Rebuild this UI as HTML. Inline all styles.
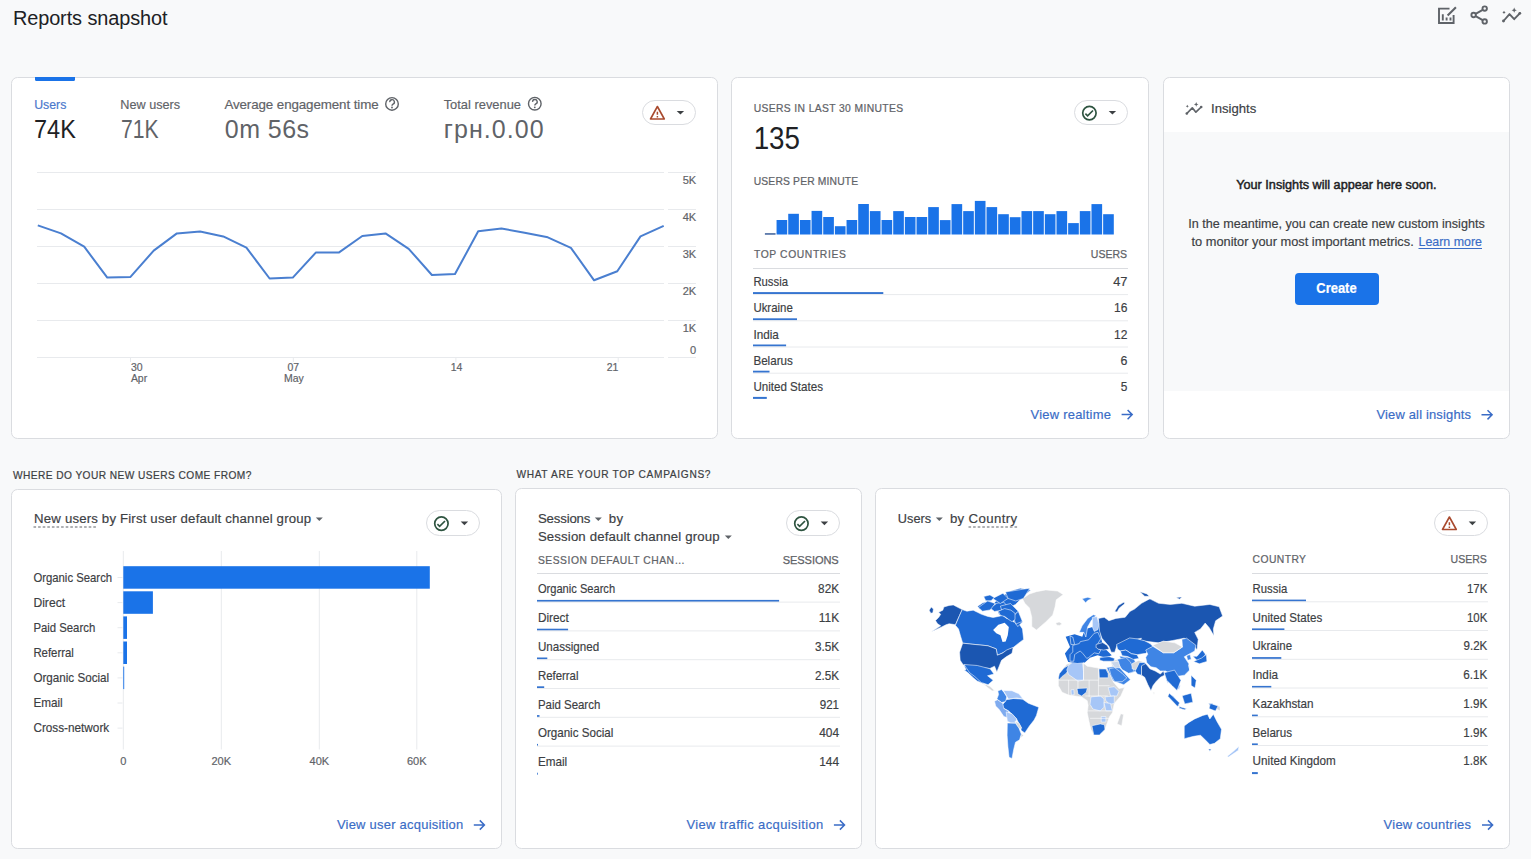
<!DOCTYPE html><html><head><meta charset="utf-8"><title>Reports snapshot</title><style>html,body{margin:0;padding:0;background:#f8f9fa;overflow:hidden}svg{display:block;font-family:"Liberation Sans",sans-serif}</style></head><body><svg width="1531" height="859" viewBox="0 0 1531 859"><rect x="0" y="0" width="1531" height="859" fill="#f8f9fa" /><text x="12.9" y="24.9" font-size="19.91" fill="#202124" textLength="154.6" lengthAdjust="spacing" >Reports snapshot</text><g fill="none" stroke="#5f6368" stroke-width="1.9"><path d="M1449.5 8.6H1439V23H1453.6V15"/><path d="M1442.8 14.2V20.4M1446.6 17.4V20.4M1450.5 17.4V20.4"/><circle cx="1484.7" cy="8.6" r="2.2"/><circle cx="1473.6" cy="15" r="2.2"/><circle cx="1484.7" cy="21.4" r="2.2"/><path d="M1475.6 13.8L1482.7 9.8M1475.6 16.2L1482.7 20.2"/></g><path d="M1447.6 15.6L1454.2 9L1455.9 7.3" stroke="#5f6368" stroke-width="2.1" fill="none"/><g fill="none" stroke="#5f6368" stroke-width="1.9" stroke-linecap="round" stroke-linejoin="round"><path d="M1503.5 21L1509.5 14.1L1514.2 19.2L1519.8 13.3"/></g><circle cx="1503.5" cy="21" r="1.4" fill="#5f6368"/><circle cx="1519.8" cy="13.3" r="1.4" fill="#5f6368"/><path d="M1504 10.8l0.6 1 1 0.6-1 0.6-0.6 1-0.6-1-1-0.6 1-0.6z M1514.2 7.6l0.8 1.8 1.8 0.8-1.8 0.8-0.8 1.8-0.8-1.8-1.8-0.8 1.8-0.8z" fill="#5f6368"/><rect x="11.5" y="77.5" width="706" height="361" fill="#fff" rx="6" stroke="#dadce0" stroke-width="1" /><path d="M35 77H75V79.5Q75 81 73.5 81H36.5Q35 81 35 79.5Z" fill="#1a73e8"/><text x="34.2" y="108.9" font-size="13.08" fill="#4a78cc" textLength="32.2" lengthAdjust="spacingAndGlyphs" stroke="#4a78cc" stroke-width="0.18">Users</text><text x="120.3" y="109.2" font-size="13.37" fill="#5f6368" textLength="59.8" lengthAdjust="spacingAndGlyphs" stroke="#5f6368" stroke-width="0.18">New users</text><text x="224.4" y="109.2" font-size="13.37" fill="#5f6368" textLength="154.2" lengthAdjust="spacing" stroke="#5f6368" stroke-width="0.18">Average engagement time</text><circle cx="392" cy="103.89999999999999" r="6.3" fill="none" stroke="#5f6368" stroke-width="1.4"/><path d="M389.8 102.1A2.3 2.3 0 1 1 393.0 104.1Q392.0 104.7 392.0 105.7" fill="none" stroke="#5f6368" stroke-width="1.4"/><circle cx="392" cy="107.5" r="0.9" fill="#5f6368"/><text x="443.7" y="108.9" font-size="13.37" fill="#5f6368" textLength="77.3" lengthAdjust="spacingAndGlyphs" stroke="#5f6368" stroke-width="0.18">Total revenue</text><circle cx="534.8" cy="103.7" r="6.3" fill="none" stroke="#5f6368" stroke-width="1.4"/><path d="M532.6 101.9A2.3 2.3 0 1 1 535.8 103.9Q534.8 104.5 534.8 105.5" fill="none" stroke="#5f6368" stroke-width="1.4"/><circle cx="534.8" cy="107.3" r="0.9" fill="#5f6368"/><text x="34.0" y="137.7" font-size="25.00" fill="#202124" textLength="41.8" lengthAdjust="spacingAndGlyphs" >74K</text><text x="120.9" y="137.7" font-size="25.00" fill="#5f6368" textLength="37.6" lengthAdjust="spacingAndGlyphs" >71K</text><text x="224.8" y="137.7" font-size="25.00" fill="#5f6368" textLength="84.2" lengthAdjust="spacing" >0m 56s</text><text x="443.7" y="137.7" font-size="25.00" fill="#5f6368" textLength="100.0" lengthAdjust="spacing" >грн.0.00</text><rect x="642.5" y="100.5" width="53" height="24" fill="#fff" rx="12.5" stroke="#dadce0" stroke-width="1" /><path d="M657.4 106.5L664.3 119.0L650.5 119.0Z" fill="none" stroke="#a94a2e" stroke-width="1.6" stroke-linejoin="round"/><path d="M657.4 111.7V114.7M657.4 115.9V117.4" stroke="#a94a2e" stroke-width="1.5"/><path d="M676.7 111.0L684.1 111.0L680.4 114.6Z" fill="#3c4043"/><line x1="37" y1="172.5" x2="664" y2="172.5" stroke="#e8eaed" stroke-width="1" /><line x1="668" y1="172.5" x2="696" y2="172.5" stroke="#e8eaed" stroke-width="1" /><line x1="37" y1="209.5" x2="664" y2="209.5" stroke="#e8eaed" stroke-width="1" /><line x1="668" y1="209.5" x2="696" y2="209.5" stroke="#e8eaed" stroke-width="1" /><line x1="37" y1="246.5" x2="664" y2="246.5" stroke="#e8eaed" stroke-width="1" /><line x1="668" y1="246.5" x2="696" y2="246.5" stroke="#e8eaed" stroke-width="1" /><line x1="37" y1="283.5" x2="664" y2="283.5" stroke="#e8eaed" stroke-width="1" /><line x1="668" y1="283.5" x2="696" y2="283.5" stroke="#e8eaed" stroke-width="1" /><line x1="37" y1="320.5" x2="664" y2="320.5" stroke="#e8eaed" stroke-width="1" /><line x1="668" y1="320.5" x2="696" y2="320.5" stroke="#e8eaed" stroke-width="1" /><line x1="37" y1="357.5" x2="664" y2="357.5" stroke="#e8eaed" stroke-width="1" /><line x1="668" y1="357.5" x2="696" y2="357.5" stroke="#e8eaed" stroke-width="1" /><text x="696.2" y="184.4" font-size="11.05" fill="#5f6368" text-anchor="end" stroke="#5f6368" stroke-width="0.18">5K</text><text x="696.2" y="221.2" font-size="11.05" fill="#5f6368" text-anchor="end" stroke="#5f6368" stroke-width="0.18">4K</text><text x="696.2" y="258.0" font-size="11.05" fill="#5f6368" text-anchor="end" stroke="#5f6368" stroke-width="0.18">3K</text><text x="696.2" y="294.8" font-size="11.05" fill="#5f6368" text-anchor="end" stroke="#5f6368" stroke-width="0.18">2K</text><text x="696.2" y="331.6" font-size="11.05" fill="#5f6368" text-anchor="end" stroke="#5f6368" stroke-width="0.18">1K</text><text x="696.2" y="353.8" font-size="11.05" fill="#5f6368" text-anchor="end" stroke="#5f6368" stroke-width="0.18">0</text><line x1="130.5" y1="357" x2="130.5" y2="362" stroke="#e8eaed" stroke-width="1" /><line x1="293.3" y1="357" x2="293.3" y2="362" stroke="#e8eaed" stroke-width="1" /><line x1="455.9" y1="357" x2="455.9" y2="362" stroke="#e8eaed" stroke-width="1" /><line x1="618.2" y1="357" x2="618.2" y2="362" stroke="#e8eaed" stroke-width="1" /><text x="130.9" y="370.9" font-size="10.47" fill="#5f6368" stroke="#5f6368" stroke-width="0.18">30</text><text x="130.9" y="381.7" font-size="10.47" fill="#5f6368" stroke="#5f6368" stroke-width="0.18">Apr</text><text x="287.5" y="370.9" font-size="10.47" fill="#5f6368" stroke="#5f6368" stroke-width="0.18">07</text><text x="284.0" y="381.7" font-size="10.47" fill="#5f6368" stroke="#5f6368" stroke-width="0.18">May</text><text x="450.8" y="370.9" font-size="10.47" fill="#5f6368" stroke="#5f6368" stroke-width="0.18">14</text><text x="606.7" y="370.9" font-size="10.47" fill="#5f6368" stroke="#5f6368" stroke-width="0.18">21</text><polyline points="37.8,225.4 61.0,233.4 84.2,246.7 107.3,277.6 130.5,276.9 153.7,250.6 176.9,233.4 200.1,231.6 223.2,236.4 246.4,247.6 269.6,278.5 292.8,277.6 316.0,252.4 339.1,252.4 362.3,236.0 385.5,233.4 408.7,248.8 431.9,275.0 455.0,274.1 478.2,231.2 501.4,228.4 524.6,232.8 547.8,237.3 570.9,247.8 594.1,280.3 617.3,271.2 640.5,236.4 663.7,225.9" fill="none" stroke="#4a7fd0" stroke-width="2" stroke-linejoin="round"/><rect x="731.5" y="77.5" width="417" height="361" fill="#fff" rx="6" stroke="#dadce0" stroke-width="1" /><text x="753.7" y="112.1" font-size="10.32" fill="#5f6368" textLength="149.4" lengthAdjust="spacing" stroke="#5f6368" stroke-width="0.22">USERS IN LAST 30 MINUTES</text><text x="753.7" y="149.2" font-size="31.40" fill="#202124" textLength="46.3" lengthAdjust="spacingAndGlyphs" >135</text><rect x="1074.5" y="100.5" width="53" height="24" fill="#fff" rx="12.5" stroke="#dadce0" stroke-width="1" /><circle cx="1089.4" cy="113.1" r="6.7" fill="none" stroke="#2e5440" stroke-width="1.7"/><path d="M1085.4 113.7L1087.6 115.8L1093.0 110.5" fill="none" stroke="#2e5440" stroke-width="1.7"/><path d="M1108.7 111.0L1116.1 111.0L1112.4 114.6Z" fill="#3c4043"/><text x="753.7" y="185.2" font-size="10.32" fill="#5f6368" textLength="104.5" lengthAdjust="spacing" stroke="#5f6368" stroke-width="0.22">USERS PER MINUTE</text><rect x="764.90" y="233.2" width="10.66" height="1.5" fill="#3b5f9a" /><rect x="776.56" y="220.0" width="10.66" height="14.50" fill="#1a73e8" /><rect x="788.23" y="213.8" width="10.66" height="20.70" fill="#1a73e8" /><rect x="799.89" y="220" width="10.66" height="14.50" fill="#1a73e8" /><rect x="811.55" y="210.9" width="10.66" height="23.60" fill="#1a73e8" /><rect x="823.22" y="217" width="10.66" height="17.50" fill="#1a73e8" /><rect x="834.88" y="226.2" width="10.66" height="8.30" fill="#1a73e8" /><rect x="846.54" y="220" width="10.66" height="14.50" fill="#1a73e8" /><rect x="858.21" y="204" width="10.66" height="30.50" fill="#1a73e8" /><rect x="869.87" y="211.1" width="10.66" height="23.40" fill="#1a73e8" /><rect x="881.53" y="220" width="10.66" height="14.50" fill="#1a73e8" /><rect x="893.20" y="211.1" width="10.66" height="23.40" fill="#1a73e8" /><rect x="904.86" y="217" width="10.66" height="17.50" fill="#1a73e8" /><rect x="916.52" y="217" width="10.66" height="17.50" fill="#1a73e8" /><rect x="928.19" y="207.1" width="10.66" height="27.40" fill="#1a73e8" /><rect x="939.85" y="220.1" width="10.66" height="14.40" fill="#1a73e8" /><rect x="951.51" y="204.1" width="10.66" height="30.40" fill="#1a73e8" /><rect x="963.18" y="211.1" width="10.66" height="23.40" fill="#1a73e8" /><rect x="974.84" y="200.9" width="10.66" height="33.60" fill="#1a73e8" /><rect x="986.50" y="207.1" width="10.66" height="27.40" fill="#1a73e8" /><rect x="998.17" y="214.2" width="10.66" height="20.30" fill="#1a73e8" /><rect x="1009.83" y="217.2" width="10.66" height="17.30" fill="#1a73e8" /><rect x="1021.49" y="211.1" width="10.66" height="23.40" fill="#1a73e8" /><rect x="1033.16" y="211.1" width="10.66" height="23.40" fill="#1a73e8" /><rect x="1044.82" y="214.2" width="10.66" height="20.30" fill="#1a73e8" /><rect x="1056.48" y="211.1" width="10.66" height="23.40" fill="#1a73e8" /><rect x="1068.15" y="223.1" width="10.66" height="11.40" fill="#1a73e8" /><rect x="1079.81" y="211.1" width="10.66" height="23.40" fill="#1a73e8" /><rect x="1091.47" y="204.1" width="10.66" height="30.40" fill="#1a73e8" /><rect x="1103.14" y="214.2" width="10.66" height="20.30" fill="#1a73e8" /><text x="753.9" y="257.9" font-size="10.32" fill="#5f6368" textLength="91.9" lengthAdjust="spacing" stroke="#5f6368" stroke-width="0.22">TOP COUNTRIES</text><text x="1127.0" y="257.9" font-size="11.05" fill="#5f6368" text-anchor="end" textLength="36.2" lengthAdjust="spacingAndGlyphs" stroke="#5f6368" stroke-width="0.25">USERS</text><line x1="753" y1="268.5" x2="1128" y2="268.5" stroke="#dadce0" stroke-width="1" /><text x="753.4" y="286.1" font-size="12.79" fill="#3c4043" textLength="34.6" lengthAdjust="spacingAndGlyphs" stroke="#3c4043" stroke-width="0.18">Russia</text><text x="1127.4" y="286.1" font-size="12.79" fill="#3c4043" text-anchor="end" textLength="14.2" lengthAdjust="spacing" stroke="#3c4043" stroke-width="0.18">47</text><rect x="753" y="292.1" width="130.3" height="2" fill="#3574d0" /><line x1="753" y1="294.6" x2="1128" y2="294.6" stroke="#e8eaed" stroke-width="1" /><text x="753.4" y="312.3" font-size="12.79" fill="#3c4043" textLength="39.4" lengthAdjust="spacingAndGlyphs" stroke="#3c4043" stroke-width="0.18">Ukraine</text><text x="1127.4" y="312.3" font-size="12.79" fill="#3c4043" text-anchor="end" textLength="13.4" lengthAdjust="spacingAndGlyphs" stroke="#3c4043" stroke-width="0.18">16</text><rect x="753" y="318.3" width="44.0" height="2" fill="#3574d0" /><line x1="753" y1="320.8" x2="1128" y2="320.8" stroke="#e8eaed" stroke-width="1" /><text x="753.4" y="338.5" font-size="12.79" fill="#3c4043" textLength="25.4" lengthAdjust="spacingAndGlyphs" stroke="#3c4043" stroke-width="0.18">India</text><text x="1127.4" y="338.5" font-size="12.79" fill="#3c4043" text-anchor="end" textLength="13.4" lengthAdjust="spacingAndGlyphs" stroke="#3c4043" stroke-width="0.18">12</text><rect x="753" y="344.5" width="33.1" height="2" fill="#3574d0" /><line x1="753" y1="347.0" x2="1128" y2="347.0" stroke="#e8eaed" stroke-width="1" /><text x="753.4" y="364.7" font-size="12.79" fill="#3c4043" textLength="39.4" lengthAdjust="spacingAndGlyphs" stroke="#3c4043" stroke-width="0.18">Belarus</text><text x="1127.4" y="364.7" font-size="12.79" fill="#3c4043" text-anchor="end" textLength="6.9" lengthAdjust="spacingAndGlyphs" stroke="#3c4043" stroke-width="0.18">6</text><rect x="753" y="370.70000000000005" width="16.5" height="2" fill="#3574d0" /><line x1="753" y1="373.20000000000005" x2="1128" y2="373.20000000000005" stroke="#e8eaed" stroke-width="1" /><text x="753.4" y="390.9" font-size="12.79" fill="#3c4043" textLength="69.6" lengthAdjust="spacingAndGlyphs" stroke="#3c4043" stroke-width="0.18">United States</text><text x="1127.4" y="390.9" font-size="12.79" fill="#3c4043" text-anchor="end" textLength="6.6" lengthAdjust="spacingAndGlyphs" stroke="#3c4043" stroke-width="0.18">5</text><rect x="753" y="396.90000000000003" width="13.8" height="2" fill="#3574d0" /><text x="1030.6" y="418.9" font-size="12.94" fill="#3a6cc6" textLength="80.3" lengthAdjust="spacing" stroke="#3a6cc6" stroke-width="0.18">View realtime</text><path d="M1121.6 414.6H1131.8M1127.6 410.0L1132.2 414.6L1127.6 419.2" stroke="#3a6cc6" stroke-width="1.5" fill="none"/><rect x="1163.5" y="77.5" width="346" height="361" fill="#fff" rx="6" stroke="#dadce0" stroke-width="1" /><rect x="1164" y="132" width="345" height="259" fill="#f8f9fa" /><g fill="none" stroke="#5f6368" stroke-width="1.7" stroke-linecap="round" stroke-linejoin="round"><path d="M1186.8 113.5L1192.3 107.8L1195.9 112.2L1201.2 107"/></g><circle cx="1186.8" cy="113.5" r="1.3" fill="#5f6368"/><circle cx="1201.2" cy="107" r="1.3" fill="#5f6368"/><path d="M1187.3 104.7l0.5 1 1 0.5-1 0.5-0.5 1-0.5-1-1-0.5 1-0.5z M1196.2 102.1l0.7 1.6 1.6 0.7-1.6 0.7-0.7 1.6-0.7-1.6-1.6-0.7 1.6-0.7z" fill="#5f6368"/><text x="1211.0" y="112.7" font-size="13.66" fill="#3c4043" textLength="45.3" lengthAdjust="spacingAndGlyphs" stroke="#3c4043" stroke-width="0.18">Insights</text><text x="1236.2" y="189.1" font-size="13.66" fill="#202124" textLength="200.3" lengthAdjust="spacingAndGlyphs" stroke="#202124" stroke-width="0.5">Your Insights will appear here soon.</text><text x="1188.3" y="228.0" font-size="13.37" fill="#3c4043" textLength="296.4" lengthAdjust="spacingAndGlyphs" stroke="#3c4043" stroke-width="0.18">In the meantime, you can create new custom insights</text><text x="1191.5" y="245.9" font-size="13.37" fill="#3c4043" textLength="222.2" lengthAdjust="spacingAndGlyphs" stroke="#3c4043" stroke-width="0.18">to monitor your most important metrics.</text><text x="1418.5" y="245.9" font-size="13.37" fill="#3a6cc6" textLength="63.5" lengthAdjust="spacingAndGlyphs" stroke="#3a6cc6" stroke-width="0.18">Learn more</text><line x1="1418.5" y1="248.5" x2="1482" y2="248.5" stroke="#3a6cc6" stroke-width="1" /><rect x="1295" y="273" width="84" height="32" fill="#1a73e8" rx="4" /><text x="1316.3" y="293.0" font-size="13.95" fill="#fff" font-weight="700" textLength="40.3" lengthAdjust="spacingAndGlyphs" stroke="#fff" stroke-width="0.2">Create</text><text x="1376.5" y="419.3" font-size="12.94" fill="#3a6cc6" textLength="94.5" lengthAdjust="spacing" stroke="#3a6cc6" stroke-width="0.18">View all insights</text><path d="M1481.5 414.8H1491.7M1487.5 410.2L1492.1 414.8L1487.5 419.4" stroke="#3a6cc6" stroke-width="1.5" fill="none"/><text x="12.9" y="478.9" font-size="10.17" fill="#3c4043" textLength="238.5" lengthAdjust="spacing" stroke="#3c4043" stroke-width="0.2">WHERE DO YOUR NEW USERS COME FROM?</text><text x="516.4" y="478.1" font-size="10.17" fill="#3c4043" textLength="194.1" lengthAdjust="spacing" stroke="#3c4043" stroke-width="0.2">WHAT ARE YOUR TOP CAMPAIGNS?</text><rect x="11.5" y="489.5" width="490" height="359" fill="#fff" rx="6" stroke="#dadce0" stroke-width="1" /><text x="34.1" y="523.3" font-size="13.23" fill="#3c4043" textLength="277.0" lengthAdjust="spacing" stroke="#3c4043" stroke-width="0.18">New users by First user default channel group</text><line x1="33.5" y1="527" x2="96" y2="527" stroke="#5f6368" stroke-width="1" stroke-dasharray="2.6 2"/><path d="M315.8 517.5L322.8 517.5L319.3 521.0Z" fill="#5f6368"/><rect x="426.5" y="510.5" width="53" height="25" fill="#fff" rx="13.0" stroke="#dadce0" stroke-width="1" /><circle cx="441.4" cy="523.6" r="6.7" fill="none" stroke="#2e5440" stroke-width="1.7"/><path d="M437.4 524.2L439.6 526.3L445.0 521.0" fill="none" stroke="#2e5440" stroke-width="1.7"/><path d="M460.7 521.5L468.1 521.5L464.4 525.2Z" fill="#3c4043"/><line x1="123.3" y1="551" x2="123.3" y2="749.5" stroke="#e8eaed" stroke-width="1" /><line x1="221.3" y1="551" x2="221.3" y2="749.5" stroke="#e8eaed" stroke-width="1" /><line x1="319.3" y1="551" x2="319.3" y2="749.5" stroke="#e8eaed" stroke-width="1" /><line x1="416.8" y1="551" x2="416.8" y2="749.5" stroke="#e8eaed" stroke-width="1" /><text x="33.4" y="581.7" font-size="12.94" fill="#3c4043" textLength="78.7" lengthAdjust="spacingAndGlyphs" stroke="#3c4043" stroke-width="0.18">Organic Search</text><line x1="117.5" y1="577.5" x2="122.5" y2="577.5" stroke="#e8eaed" stroke-width="1" /><rect x="123.3" y="566.2" width="306.5" height="22.5" fill="#1a73e8" /><text x="33.4" y="606.8" font-size="12.94" fill="#3c4043" textLength="31.7" lengthAdjust="spacingAndGlyphs" stroke="#3c4043" stroke-width="0.18">Direct</text><line x1="117.5" y1="602.6" x2="122.5" y2="602.6" stroke="#e8eaed" stroke-width="1" /><rect x="123.3" y="591.3" width="29.6" height="22.5" fill="#1a73e8" /><text x="33.4" y="631.9" font-size="12.94" fill="#3c4043" textLength="61.8" lengthAdjust="spacingAndGlyphs" stroke="#3c4043" stroke-width="0.18">Paid Search</text><line x1="117.5" y1="627.7" x2="122.5" y2="627.7" stroke="#e8eaed" stroke-width="1" /><rect x="123.3" y="616.4" width="3.7" height="22.5" fill="#1a73e8" /><text x="33.4" y="657.0" font-size="12.94" fill="#3c4043" textLength="40.5" lengthAdjust="spacingAndGlyphs" stroke="#3c4043" stroke-width="0.18">Referral</text><line x1="117.5" y1="652.8" x2="122.5" y2="652.8" stroke="#e8eaed" stroke-width="1" /><rect x="123.3" y="641.5" width="3.7" height="22.5" fill="#1a73e8" /><text x="33.4" y="682.1" font-size="12.94" fill="#3c4043" textLength="75.8" lengthAdjust="spacingAndGlyphs" stroke="#3c4043" stroke-width="0.18">Organic Social</text><line x1="117.5" y1="677.9" x2="122.5" y2="677.9" stroke="#e8eaed" stroke-width="1" /><rect x="123.3" y="666.6" width="0.9" height="22.5" fill="#1a73e8" /><text x="33.4" y="707.2" font-size="12.94" fill="#3c4043" textLength="29.3" lengthAdjust="spacingAndGlyphs" stroke="#3c4043" stroke-width="0.18">Email</text><line x1="117.5" y1="703.0" x2="122.5" y2="703.0" stroke="#e8eaed" stroke-width="1" /><text x="33.4" y="732.3" font-size="12.94" fill="#3c4043" textLength="75.8" lengthAdjust="spacingAndGlyphs" stroke="#3c4043" stroke-width="0.18">Cross-network</text><line x1="117.5" y1="728.1" x2="122.5" y2="728.1" stroke="#e8eaed" stroke-width="1" /><text x="123.3" y="765.2" font-size="11.05" fill="#5f6368" text-anchor="middle" stroke="#5f6368" stroke-width="0.18">0</text><text x="221.3" y="765.2" font-size="11.05" fill="#5f6368" text-anchor="middle" stroke="#5f6368" stroke-width="0.18">20K</text><text x="319.4" y="765.2" font-size="11.05" fill="#5f6368" text-anchor="middle" stroke="#5f6368" stroke-width="0.18">40K</text><text x="416.8" y="765.2" font-size="11.05" fill="#5f6368" text-anchor="middle" stroke="#5f6368" stroke-width="0.18">60K</text><text x="336.9" y="829.0" font-size="12.94" fill="#3a6cc6" textLength="126.3" lengthAdjust="spacing" stroke="#3a6cc6" stroke-width="0.18">View user acquisition</text><path d="M473.8 825.0H484.0M479.8 820.4L484.4 825.0L479.8 829.6" stroke="#3a6cc6" stroke-width="1.5" fill="none"/><rect x="515.5" y="488.5" width="346" height="360" fill="#fff" rx="6" stroke="#dadce0" stroke-width="1" /><text x="537.9" y="523.4" font-size="13.23" fill="#3c4043" textLength="52.5" lengthAdjust="spacing" stroke="#3c4043" stroke-width="0.18">Sessions</text><path d="M594.8 517.5L601.8 517.5L598.3 521.0Z" fill="#5f6368"/><text x="608.7" y="523.4" font-size="13.23" fill="#3c4043" textLength="14.3" lengthAdjust="spacing" stroke="#3c4043" stroke-width="0.18">by</text><text x="537.9" y="541.3" font-size="13.23" fill="#3c4043" textLength="181.6" lengthAdjust="spacing" stroke="#3c4043" stroke-width="0.18">Session default channel group</text><path d="M724.8 535.5L731.8 535.5L728.3 539.0Z" fill="#5f6368"/><rect x="786.5" y="510.5" width="53" height="25" fill="#fff" rx="13.0" stroke="#dadce0" stroke-width="1" /><circle cx="801.4" cy="523.6" r="6.7" fill="none" stroke="#2e5440" stroke-width="1.7"/><path d="M797.4 524.2L799.6 526.3L805.0 521.0" fill="none" stroke="#2e5440" stroke-width="1.7"/><path d="M820.7 521.5L828.1 521.5L824.4 525.2Z" fill="#3c4043"/><text x="537.9" y="563.5" font-size="10.32" fill="#5f6368" textLength="147.0" lengthAdjust="spacing" stroke="#5f6368" stroke-width="0.22">SESSION DEFAULT CHAN…</text><text x="838.7" y="563.5" font-size="11.05" fill="#5f6368" text-anchor="end" textLength="56.0" lengthAdjust="spacing" stroke="#5f6368" stroke-width="0.25">SESSIONS</text><line x1="537" y1="573.5" x2="840" y2="573.5" stroke="#dadce0" stroke-width="1" /><text x="537.9" y="593.3" font-size="12.79" fill="#3c4043" textLength="77.2" lengthAdjust="spacingAndGlyphs" stroke="#3c4043" stroke-width="0.18">Organic Search</text><text x="839.1" y="593.3" font-size="12.79" fill="#3c4043" text-anchor="end" textLength="21.0" lengthAdjust="spacingAndGlyphs" stroke="#3c4043" stroke-width="0.18">82K</text><rect x="537" y="599.9" width="242.1" height="2" fill="#3574d0" /><line x1="537" y1="602.1" x2="840" y2="602.1" stroke="#e8eaed" stroke-width="1" /><text x="537.9" y="622.1" font-size="12.79" fill="#3c4043" textLength="30.9" lengthAdjust="spacingAndGlyphs" stroke="#3c4043" stroke-width="0.18">Direct</text><text x="839.1" y="622.1" font-size="12.79" fill="#3c4043" text-anchor="end" textLength="20.3" lengthAdjust="spacingAndGlyphs" stroke="#3c4043" stroke-width="0.18">11K</text><rect x="537" y="628.7" width="31.1" height="2" fill="#3574d0" /><line x1="537" y1="630.9" x2="840" y2="630.9" stroke="#e8eaed" stroke-width="1" /><text x="537.9" y="650.9" font-size="12.79" fill="#3c4043" textLength="61.3" lengthAdjust="spacingAndGlyphs" stroke="#3c4043" stroke-width="0.18">Unassigned</text><text x="839.1" y="650.9" font-size="12.79" fill="#3c4043" text-anchor="end" textLength="24.1" lengthAdjust="spacingAndGlyphs" stroke="#3c4043" stroke-width="0.18">3.5K</text><rect x="537" y="657.5" width="10.3" height="2" fill="#3574d0" /><line x1="537" y1="659.7" x2="840" y2="659.7" stroke="#e8eaed" stroke-width="1" /><text x="537.9" y="679.7" font-size="12.79" fill="#3c4043" textLength="40.6" lengthAdjust="spacingAndGlyphs" stroke="#3c4043" stroke-width="0.18">Referral</text><text x="839.1" y="679.7" font-size="12.79" fill="#3c4043" text-anchor="end" textLength="24.1" lengthAdjust="spacingAndGlyphs" stroke="#3c4043" stroke-width="0.18">2.5K</text><rect x="537" y="686.3" width="7.2" height="2" fill="#3574d0" /><line x1="537" y1="688.5" x2="840" y2="688.5" stroke="#e8eaed" stroke-width="1" /><text x="537.9" y="708.5" font-size="12.79" fill="#3c4043" textLength="62.4" lengthAdjust="spacingAndGlyphs" stroke="#3c4043" stroke-width="0.18">Paid Search</text><text x="839.1" y="708.5" font-size="12.79" fill="#3c4043" text-anchor="end" textLength="19.4" lengthAdjust="spacingAndGlyphs" stroke="#3c4043" stroke-width="0.18">921</text><rect x="537" y="715.1" width="2.5" height="2" fill="#3574d0" /><line x1="537" y1="717.3" x2="840" y2="717.3" stroke="#e8eaed" stroke-width="1" /><text x="537.9" y="737.3" font-size="12.79" fill="#3c4043" textLength="75.4" lengthAdjust="spacingAndGlyphs" stroke="#3c4043" stroke-width="0.18">Organic Social</text><text x="839.1" y="737.3" font-size="12.79" fill="#3c4043" text-anchor="end" textLength="19.9" lengthAdjust="spacingAndGlyphs" stroke="#3c4043" stroke-width="0.18">404</text><rect x="537" y="743.9" width="1.0" height="2" fill="#3574d0" /><line x1="537" y1="746.1" x2="840" y2="746.1" stroke="#e8eaed" stroke-width="1" /><text x="537.9" y="766.1" font-size="12.79" fill="#3c4043" textLength="29.3" lengthAdjust="spacingAndGlyphs" stroke="#3c4043" stroke-width="0.18">Email</text><text x="839.1" y="766.1" font-size="12.79" fill="#3c4043" text-anchor="end" textLength="19.9" lengthAdjust="spacingAndGlyphs" stroke="#3c4043" stroke-width="0.18">144</text><rect x="537" y="772.7" width="0.8" height="2" fill="#3574d0" /><text x="686.4" y="828.7" font-size="12.94" fill="#3a6cc6" textLength="136.9" lengthAdjust="spacing" stroke="#3a6cc6" stroke-width="0.18">View traffic acquisition</text><path d="M833.9 825.0H844.1M839.9 820.4L844.5 825.0L839.9 829.6" stroke="#3a6cc6" stroke-width="1.5" fill="none"/><rect x="875.5" y="488.5" width="634" height="360" fill="#fff" rx="6" stroke="#dadce0" stroke-width="1" /><text x="897.8" y="523.4" font-size="13.23" fill="#3c4043" textLength="33.3" lengthAdjust="spacingAndGlyphs" stroke="#3c4043" stroke-width="0.18">Users</text><path d="M935.8 517.5L942.8 517.5L939.3 521.0Z" fill="#5f6368"/><text x="949.9" y="523.4" font-size="13.23" fill="#3c4043" textLength="14.3" lengthAdjust="spacing" stroke="#3c4043" stroke-width="0.18">by</text><text x="968.5" y="523.4" font-size="13.23" fill="#3c4043" textLength="48.7" lengthAdjust="spacing" stroke="#3c4043" stroke-width="0.18">Country</text><line x1="968.5" y1="527" x2="1017.2" y2="527" stroke="#5f6368" stroke-width="1" stroke-dasharray="2.6 2"/><rect x="1434.5" y="510.5" width="53" height="25" fill="#fff" rx="13.0" stroke="#dadce0" stroke-width="1" /><path d="M1449.4 517.0L1456.3 529.5L1442.5 529.5Z" fill="none" stroke="#a94a2e" stroke-width="1.6" stroke-linejoin="round"/><path d="M1449.4 522.2V525.2M1449.4 526.4V527.9" stroke="#a94a2e" stroke-width="1.5"/><path d="M1468.7 521.5L1476.1 521.5L1472.4 525.2Z" fill="#3c4043"/><text x="1252.6" y="562.9" font-size="10.32" fill="#5f6368" textLength="53.4" lengthAdjust="spacing" stroke="#5f6368" stroke-width="0.22">COUNTRY</text><text x="1486.9" y="562.9" font-size="11.05" fill="#5f6368" text-anchor="end" textLength="36.3" lengthAdjust="spacingAndGlyphs" stroke="#5f6368" stroke-width="0.25">USERS</text><line x1="1252" y1="573.5" x2="1488" y2="573.5" stroke="#dadce0" stroke-width="1" /><text x="1252.6" y="592.9" font-size="12.79" fill="#3c4043" textLength="34.6" lengthAdjust="spacingAndGlyphs" stroke="#3c4043" stroke-width="0.18">Russia</text><text x="1487.3" y="592.9" font-size="12.79" fill="#3c4043" text-anchor="end" textLength="20.3" lengthAdjust="spacingAndGlyphs" stroke="#3c4043" stroke-width="0.18">17K</text><rect x="1252" y="599.6" width="54.0" height="2" fill="#3574d0" /><line x1="1252" y1="601.8" x2="1488" y2="601.8" stroke="#e8eaed" stroke-width="1" /><text x="1252.6" y="621.6" font-size="12.79" fill="#3c4043" textLength="69.6" lengthAdjust="spacingAndGlyphs" stroke="#3c4043" stroke-width="0.18">United States</text><text x="1487.3" y="621.6" font-size="12.79" fill="#3c4043" text-anchor="end" textLength="20.3" lengthAdjust="spacingAndGlyphs" stroke="#3c4043" stroke-width="0.18">10K</text><rect x="1252" y="628.4" width="32.4" height="2" fill="#3574d0" /><line x1="1252" y1="630.5" x2="1488" y2="630.5" stroke="#e8eaed" stroke-width="1" /><text x="1252.6" y="650.4" font-size="12.79" fill="#3c4043" textLength="39.4" lengthAdjust="spacingAndGlyphs" stroke="#3c4043" stroke-width="0.18">Ukraine</text><text x="1487.3" y="650.4" font-size="12.79" fill="#3c4043" text-anchor="end" textLength="23.8" lengthAdjust="spacingAndGlyphs" stroke="#3c4043" stroke-width="0.18">9.2K</text><rect x="1252" y="657.1" width="29.3" height="2" fill="#3574d0" /><line x1="1252" y1="659.3" x2="1488" y2="659.3" stroke="#e8eaed" stroke-width="1" /><text x="1252.6" y="679.1" font-size="12.79" fill="#3c4043" textLength="25.4" lengthAdjust="spacingAndGlyphs" stroke="#3c4043" stroke-width="0.18">India</text><text x="1487.3" y="679.1" font-size="12.79" fill="#3c4043" text-anchor="end" textLength="24.0" lengthAdjust="spacingAndGlyphs" stroke="#3c4043" stroke-width="0.18">6.1K</text><rect x="1252" y="685.9" width="19.3" height="2" fill="#3574d0" /><line x1="1252" y1="688.0" x2="1488" y2="688.0" stroke="#e8eaed" stroke-width="1" /><text x="1252.6" y="707.9" font-size="12.79" fill="#3c4043" textLength="61.0" lengthAdjust="spacingAndGlyphs" stroke="#3c4043" stroke-width="0.18">Kazakhstan</text><text x="1487.3" y="707.9" font-size="12.79" fill="#3c4043" text-anchor="end" textLength="24.0" lengthAdjust="spacingAndGlyphs" stroke="#3c4043" stroke-width="0.18">1.9K</text><rect x="1252" y="714.6" width="5.8" height="2" fill="#3574d0" /><line x1="1252" y1="716.8" x2="1488" y2="716.8" stroke="#e8eaed" stroke-width="1" /><text x="1252.6" y="736.6" font-size="12.79" fill="#3c4043" textLength="39.4" lengthAdjust="spacingAndGlyphs" stroke="#3c4043" stroke-width="0.18">Belarus</text><text x="1487.3" y="736.6" font-size="12.79" fill="#3c4043" text-anchor="end" textLength="24.0" lengthAdjust="spacingAndGlyphs" stroke="#3c4043" stroke-width="0.18">1.9K</text><rect x="1252" y="743.4" width="5.8" height="2" fill="#3574d0" /><line x1="1252" y1="745.5" x2="1488" y2="745.5" stroke="#e8eaed" stroke-width="1" /><text x="1252.6" y="765.4" font-size="12.79" fill="#3c4043" textLength="83.2" lengthAdjust="spacingAndGlyphs" stroke="#3c4043" stroke-width="0.18">United Kingdom</text><text x="1487.3" y="765.4" font-size="12.79" fill="#3c4043" text-anchor="end" textLength="24.0" lengthAdjust="spacingAndGlyphs" stroke="#3c4043" stroke-width="0.18">1.8K</text><rect x="1252" y="772.1" width="5.8" height="2" fill="#3574d0" /><text x="1383.6" y="829.0" font-size="12.94" fill="#3a6cc6" textLength="87.4" lengthAdjust="spacing" stroke="#3a6cc6" stroke-width="0.18">View countries</text><path d="M1482.0 825.0H1492.2M1488.0 820.4L1492.6 825.0L1488.0 829.6" stroke="#3a6cc6" stroke-width="1.5" fill="none"/><g stroke-linejoin="round"><polygon points="1022.47,598.63 1029.46,593.97 1036.45,591.64 1045.76,589.90 1057.41,591.06 1063.23,594.56 1056.24,599.80 1055.08,606.78 1052.75,614.93 1045.76,621.92 1036.45,630.07 1031.79,626.58 1031.79,617.26 1029.46,607.95 1024.80,603.29" fill="#d6d8db" stroke="#fff" stroke-width="0.55"/><polygon points="1055.66,623.09 1059.16,621.92 1062.07,623.67 1059.74,625.41 1056.83,625.18" fill="#d6d8db" stroke="#fff" stroke-width="0.55"/><polygon points="929.19,610.15 931.29,607.00 933.38,609.10 932.86,612.77 930.76,613.29" fill="#1b56b1" stroke="#fff" stroke-width="0.55"/><polygon points="935.48,620.62 938.62,617.48 940.72,614.34 938.62,612.24 942.81,610.15 943.86,607.00 949.10,605.43 953.29,604.91 962.20,609.62 959.58,615.39 955.39,624.82 952.77,624.29 949.10,623.77 945.96,624.82 941.76,626.91 931.29,631.63 940.72,625.86 937.57,623.77" fill="#1b56b1" stroke="#fff" stroke-width="0.55"/><polygon points="962.20,609.62 966.91,611.19 973.20,610.15 977.39,612.24 981.58,614.34 987.87,616.43 993.11,617.48 998.34,616.43 1002.54,615.39 1006.73,618.53 1013.01,619.58 1013.16,621.92 1017.82,621.92 1022.47,628.91 1023.64,639.39 1018.98,642.88 1013.16,647.54 1008.50,649.87 999.18,654.53 997.30,655.20 996.25,648.91 987.87,645.77 972.15,644.20 962.72,643.15 960.62,636.34 958.53,629.01 955.39,625.34 959.58,615.39" fill="#1f6ad4" stroke="#fff" stroke-width="0.55"/><polygon points="993.11,630.05 998.34,624.82 1004.63,622.72 1008.82,626.91 1007.77,635.29 1005.68,641.58 1002.54,642.10 1000.44,635.29 996.25,633.20" fill="#ffffff"/><polygon points="977.64,606.20 982.88,602.71 988.70,600.96 992.20,602.13 989.87,607.95 985.21,610.28 979.39,609.11" fill="#1f6ad4" stroke="#fff" stroke-width="0.55"/><polygon points="985.21,597.47 989.87,596.30 992.20,599.80 987.54,600.38" fill="#1f6ad4" stroke="#fff" stroke-width="0.55"/><polygon points="994.53,602.13 1001.51,597.47 1008.50,591.64 1020.15,588.15 1030.63,589.90 1024.80,595.14 1020.15,599.80 1015.49,604.45 1010.83,606.78 1006.17,607.95 1001.51,606.78 996.86,607.95" fill="#1f6ad4" stroke="#fff" stroke-width="0.55"/><polygon points="1005.01,610.28 1011.99,609.11 1020.15,617.26 1022.47,621.92 1017.82,626.58 1011.99,618.43" fill="#1f6ad4" stroke="#fff" stroke-width="0.55"/><polygon points="996.86,609.11 1001.51,608.53 1003.84,613.77 999.18,614.93" fill="#1f6ad4" stroke="#fff" stroke-width="0.55"/><polygon points="989.87,607.95 996.86,603.29 1003.84,602.13 1008.50,607.95 1001.51,610.28 994.53,611.44" fill="#1f6ad4" stroke="#fff" stroke-width="0.55"/><polygon points="962.72,643.15 972.15,644.20 987.87,645.77 996.25,648.91 997.30,655.20 1002.54,653.11 1006.73,649.96 1011.97,647.87 1013.16,647.54 1011.99,653.36 1006.17,656.86 1001.51,660.35 999.18,666.17 996.86,671.99 994.53,666.17 989.87,668.50 985.21,667.92 980.55,669.67 975.90,668.50 971.24,666.17 963.32,665.01 960.17,660.35 959.59,652.20" fill="#1b56b1" stroke="#fff" stroke-width="0.55"/><polygon points="964.02,665.59 971.24,666.40 975.90,669.08 978.22,673.16 978.22,674.66 980.55,678.15 985.21,678.73 988.12,676.99 986.38,681.64 982.88,683.39 977.06,681.06 972.40,676.99 968.91,673.49 964.25,670.00 966.00,669.67" fill="#1f6ad4" stroke="#fff" stroke-width="0.55"/><polygon points="982.88,683.39 989.87,686.30 994.53,690.38 992.20,690.96 987.54,687.47" fill="#d6d8db" stroke="#fff" stroke-width="0.55"/><polygon points="963.99,664.48 977.31,665.51 990.12,668.83 993.96,673.96 987.55,675.75 993.19,680.36 988.07,684.71 981.15,682.41 974.75,676.52 969.63,672.68" fill="#1f6ad4" stroke="#fff" stroke-width="0.55"/><polygon points="978.59,607.38 987.55,600.97 995.24,603.53 990.12,609.94 982.43,611.22" fill="#1f6ad4" stroke="#fff" stroke-width="0.55"/><polygon points="992.68,598.41 1002.92,593.29 1008.04,598.41 1000.36,603.53" fill="#1f6ad4" stroke="#fff" stroke-width="0.55"/><polygon points="1005.48,592.01 1029.81,588.17 1023.41,598.41 1015.72,600.97 1008.04,598.41" fill="#1f6ad4" stroke="#fff" stroke-width="0.55"/><polygon points="1000.36,606.09 1010.60,603.53 1018.28,611.22 1013.16,616.34 1002.92,613.78" fill="#1f6ad4" stroke="#fff" stroke-width="0.55"/><polygon points="1018.28,611.22 1022.38,621.46 1015.72,624.02 1013.16,616.34" fill="#1f6ad4" stroke="#fff" stroke-width="0.55"/><polygon points="998.34,611.19 1004.63,608.58 1010.92,610.15 1015.00,613.29 1015.00,619.58 1011.97,621.67 1008.82,619.58 1004.63,616.43 1000.44,615.39" fill="#1f6ad4" stroke="#fff" stroke-width="0.55"/><polygon points="983.68,596.53 989.96,594.95 994.15,597.57 991.01,600.72 985.77,600.72" fill="#1f6ad4" stroke="#fff" stroke-width="0.55"/><polygon points="1006.17,699.69 1013.16,698.53 1022.47,699.11 1028.30,703.19 1038.78,707.26 1036.45,715.41 1034.12,720.07 1029.46,725.90 1024.80,732.88 1021.31,730.55 1020.15,725.90 1016.65,718.91 1011.99,714.25 1008.50,710.76 1002.68,707.85 1002.10,704.93 1004.43,702.61" fill="#1f6ad4" stroke="#fff" stroke-width="0.55"/><polygon points="997.79,690.96 1001.51,689.56 1003.84,692.13 1006.75,696.78 1005.59,701.44 1001.51,702.61 996.86,699.11 998.60,694.45" fill="#3f85e5" stroke="#fff" stroke-width="0.55"/><polygon points="1003.26,690.38 1011.99,690.73 1018.98,693.87 1023.06,699.11 1016.65,697.95 1008.50,699.11 1006.75,696.20" fill="#a6c6f7" stroke="#fff" stroke-width="0.55"/><polygon points="994.53,701.21 997.44,699.69 1002.68,703.19 1003.84,708.43 1008.50,711.34 1007.92,717.74 1003.84,716.58 999.18,709.59 995.69,706.10" fill="#7fabef" stroke="#fff" stroke-width="0.55"/><polygon points="1006.17,711.92 1011.99,713.67 1016.65,718.91 1015.49,722.98 1010.83,722.98 1007.34,721.24" fill="#a6c6f7" stroke="#fff" stroke-width="0.55"/><polygon points="1014.91,721.24 1018.98,722.98 1021.89,728.22 1018.40,728.22" fill="#d6d8db" stroke="#fff" stroke-width="0.55"/><polygon points="1020.15,732.88 1023.64,735.21 1021.31,737.54" fill="#d6d8db" stroke="#fff" stroke-width="0.55"/><polygon points="1007.34,722.98 1015.49,723.33 1018.98,728.22 1021.31,734.05 1019.56,739.87 1015.49,742.20 1013.74,749.18 1011.99,758.50 1009.08,757.34 1007.92,746.86 1007.10,735.21" fill="#3f85e5" stroke="#fff" stroke-width="0.55"/><polygon points="1058.38,678.28 1062.11,669.90 1066.76,664.31 1072.35,662.45 1082.60,662.45 1087.25,666.18 1098.43,668.04 1108.21,668.97 1113.33,682.01 1118.92,688.53 1124.51,687.60 1120.78,695.98 1114.26,703.43 1112.40,712.74 1109.60,716.47 1106.81,723.92 1104.95,729.51 1099.36,735.00 1093.77,735.00 1090.98,729.51 1089.12,722.05 1087.25,712.74 1088.18,705.29 1087.25,700.63 1081.66,696.91 1075.15,695.98 1068.63,695.05 1062.11,692.25 1058.38,685.73" fill="#d6d8db" stroke="#fff" stroke-width="0.55"/><polygon points="1058.38,678.28 1059.31,673.63 1063.97,668.04 1068.63,665.24 1071.42,666.18 1068.63,669.90 1065.83,673.63 1062.11,676.42 1059.31,679.40" fill="#1f6ad4" stroke="#fff" stroke-width="0.55"/><polygon points="1068.63,665.24 1072.35,662.45 1082.60,662.92 1083.53,671.76 1083.53,680.15 1077.94,681.08 1068.63,674.56 1066.76,669.90" fill="#a6c6f7" stroke="#fff" stroke-width="0.55"/><polygon points="1098.89,668.97 1105.88,668.97 1108.21,673.63 1108.21,677.82 1099.36,677.82" fill="#1f6ad4" stroke="#fff" stroke-width="0.55"/><polygon points="1077.01,688.53 1087.25,688.06 1086.32,692.25 1081.66,695.98 1077.94,694.12" fill="#1f6ad4" stroke="#fff" stroke-width="0.55"/><polygon points="1070.95,689.92 1073.75,689.46 1074.21,694.58 1071.42,695.05" fill="#a6c6f7" stroke="#fff" stroke-width="0.55"/><polygon points="1108.21,687.60 1114.26,686.66 1118.92,691.32 1117.05,695.98 1110.54,695.98" fill="#a6c6f7" stroke="#fff" stroke-width="0.55"/><polygon points="1090.98,696.91 1100.29,695.98 1104.02,698.77 1104.02,707.15 1100.29,710.88 1092.84,709.02 1090.05,704.36" fill="#a6c6f7" stroke="#fff" stroke-width="0.55"/><polygon points="1104.95,696.91 1114.26,695.98 1114.26,703.43 1109.60,704.36 1105.88,700.63" fill="#a6c6f7" stroke="#fff" stroke-width="0.55"/><polygon points="1104.02,702.50 1110.54,703.43 1112.40,710.88 1105.88,710.88" fill="#a6c6f7" stroke="#fff" stroke-width="0.55"/><polygon points="1101.22,716.47 1105.88,716.47 1105.88,722.05 1101.22,722.05" fill="#a6c6f7" stroke="#fff" stroke-width="0.55"/><polygon points="1091.91,725.78 1100.29,723.92 1104.48,724.85 1104.95,729.51 1099.36,735.00 1093.77,735.00" fill="#1f6ad4" stroke="#fff" stroke-width="0.55"/><polygon points="1117.05,723.92 1120.78,713.67 1123.57,714.60 1121.71,725.78" fill="#d6d8db" stroke="#fff" stroke-width="0.55"/><polygon points="1065.66,636.82 1074.62,634.26 1082.30,636.82 1084.87,629.14 1092.55,627.09 1098.95,621.46 1100.74,636.82 1103.30,647.07 1111.75,655.26 1105.35,657.82 1097.67,655.26 1089.99,657.82 1084.87,662.43 1077.18,662.94 1068.22,661.92 1064.89,653.47 1070.01,647.07" fill="#1f6ad4"/><polygon points="1110.47,660.38 1120.72,659.36 1123.79,667.55 1113.55,670.63" fill="#d6d8db" stroke="#fff" stroke-width="0.55"/><polygon points="1106.63,667.55 1118.16,666.02 1130.45,679.85 1123.79,684.71 1113.03,680.87" fill="#3f85e5" stroke="#fff" stroke-width="0.55"/><polygon points="1119.44,656.03 1133.52,658.08 1139.15,670.12 1130.45,673.19 1123.28,664.99" fill="#3f85e5" stroke="#fff" stroke-width="0.55"/><polygon points="1098.42,618.42 1104.24,617.26 1108.90,620.75 1115.89,618.42 1125.20,617.26 1129.86,611.44 1134.51,609.11 1141.50,603.29 1150.00,598.63 1149.31,598.62 1158.62,603.28 1170.26,604.44 1181.90,603.28 1194.71,606.19 1209.84,604.44 1219.15,606.77 1222.64,616.08 1215.66,620.74 1213.33,628.89 1213.91,635.87 1209.26,627.72 1205.18,623.07 1200.53,628.89 1194.71,632.38 1198.20,639.36 1197.04,649.84 1192.38,644.02 1184.23,638.20 1172.59,640.53 1158.62,642.86 1140.00,640.53 1141.50,638.21 1129.86,640.54 1122.87,642.87 1117.05,645.20 1114.72,652.19 1111.23,652.19 1108.90,646.36 1101.91,638.21 1099.59,631.23" fill="#1b56b1" stroke="#fff" stroke-width="0.55"/><polygon points="1140.00,591.64 1146.98,593.97 1149.31,596.30 1144.66,596.30" fill="#1b56b1" stroke="#fff" stroke-width="0.55"/><polygon points="1176.08,597.46 1181.90,596.88 1179.58,599.21" fill="#1b56b1" stroke="#fff" stroke-width="0.55"/><polygon points="1114.72,611.44 1118.21,605.61 1124.04,602.12 1124.62,603.87 1119.38,607.94 1117.05,612.02" fill="#1b56b1" stroke="#fff" stroke-width="0.55"/><polygon points="1082.12,598.63 1087.94,597.23 1092.02,598.63 1087.94,600.37 1085.61,602.70" fill="#3f85e5" stroke="#fff" stroke-width="0.55"/><polygon points="1080.24,641.66 1088.63,639.80 1094.21,633.28 1097.94,632.35 1100.73,638.87 1097.94,643.53 1096.08,647.25 1100.73,650.05 1098.87,653.77 1094.21,652.84 1088.63,657.50 1086.76,658.43 1083.04,653.77 1080.24,650.98 1075.59,653.77 1074.66,654.70 1073.73,661.22 1070.00,661.22 1070.00,654.70 1072.79,651.91 1072.79,645.39 1079.31,643.53" fill="#1f6ad4" stroke="#fff" stroke-width="0.55"/><polygon points="1070.00,636.08 1072.79,637.01 1074.66,644.46 1070.93,644.46" fill="#1f6ad4" stroke="#fff" stroke-width="0.55"/><polygon points="1079.31,632.35 1082.11,625.83 1087.69,618.38 1093.28,614.66 1096.08,615.59 1091.42,620.24 1087.69,626.76 1085.83,637.01 1083.97,632.35" fill="#3f85e5" stroke="#fff" stroke-width="0.55"/><polygon points="1092.35,617.45 1097.01,616.52 1098.87,623.97 1097.94,629.56 1094.21,631.42 1092.35,626.76" fill="#a6c6f7" stroke="#fff" stroke-width="0.55"/><polygon points="1096.08,644.46 1102.60,642.60 1107.25,645.39 1109.12,649.12 1103.53,650.05 1097.94,649.12 1096.08,647.25" fill="#1b56b1" stroke="#fff" stroke-width="0.55"/><polygon points="1099.80,657.50 1109.12,656.57 1114.70,658.43 1113.77,661.22 1103.53,661.22 1099.80,660.29" fill="#1f6ad4" stroke="#fff" stroke-width="0.55"/><polygon points="1116.57,644.46 1122.15,641.66 1129.60,637.94 1137.05,638.87 1144.51,640.73 1150.00,643.53 1152.80,646.35 1145.82,653.33 1142.64,653.77 1137.05,654.70 1131.47,653.77 1125.88,650.05 1120.29,650.98 1117.50,649.12" fill="#1f6ad4" stroke="#fff" stroke-width="0.55"/><polygon points="1120.29,650.98 1125.88,650.05 1131.47,653.77 1137.05,654.70 1138.92,658.43 1133.33,659.36 1127.74,656.57 1122.15,655.63" fill="#1f6ad4" stroke="#fff" stroke-width="0.55"/><polygon points="1117.50,659.36 1125.88,657.50 1130.54,662.15 1134.26,671.47 1128.67,673.33 1122.15,669.60 1118.43,664.02" fill="#3f85e5" stroke="#fff" stroke-width="0.55"/><polygon points="1110.98,662.15 1118.43,661.22 1120.29,667.74 1114.70,667.74" fill="#c9d6ea" stroke="#fff" stroke-width="0.55"/><polygon points="1109.12,668.67 1114.70,667.74 1122.15,673.33 1126.81,677.99 1122.15,681.71 1114.70,681.71 1110.98,675.19" fill="#3f85e5" stroke="#fff" stroke-width="0.55"/><polygon points="1147.81,654.19 1145.72,650.00 1152.80,646.35 1163.28,652.75 1173.76,652.75 1182.49,646.93 1181.90,639.36 1186.56,638.20 1195.87,645.18 1194.71,651.00 1184.23,656.82 1188.89,663.81 1190.05,671.96 1188.68,664.67 1189.72,669.91 1184.48,675.15 1178.20,676.19 1171.91,675.15 1165.62,670.96 1160.39,670.96 1156.19,667.81 1150.96,666.76 1146.76,662.57 1145.72,657.33" fill="#3f85e5" stroke="#fff" stroke-width="0.55"/><polygon points="1152.80,645.18 1163.28,641.11 1174.92,642.86 1182.49,646.93 1173.76,652.75 1163.28,652.75" fill="#d6d8db" stroke="#fff" stroke-width="0.55"/><polygon points="1192.87,656.29 1197.06,660.48 1203.34,658.38 1205.44,654.19 1202.30,650.00 1197.06,656.29" fill="#1f6ad4" stroke="#fff" stroke-width="0.55"/><polygon points="1193.54,661.48 1201.69,657.99 1206.35,654.50 1206.93,661.48 1199.36,663.81" fill="#1f6ad4" stroke="#fff" stroke-width="0.55"/><polygon points="1186.56,655.66 1190.05,654.50 1191.22,659.15 1187.72,660.32" fill="#3f85e5" stroke="#fff" stroke-width="0.55"/><polygon points="1132.10,663.62 1138.38,660.48 1142.57,661.53 1139.43,664.67 1136.29,669.91 1132.10,668.86" fill="#d6d8db" stroke="#fff" stroke-width="0.55"/><polygon points="1135.24,670.96 1139.43,662.57 1144.67,662.57 1145.72,664.67 1141.53,666.76 1141.53,675.15 1137.33,674.10" fill="#1f6ad4" stroke="#fff" stroke-width="0.55"/><polygon points="1141.53,665.72 1145.72,663.62 1149.91,668.86 1155.15,670.96 1160.39,674.10 1163.53,670.96 1164.58,675.15 1160.39,677.24 1156.19,681.43 1153.05,685.62 1150.96,690.86 1147.81,684.58 1144.67,677.24 1141.53,675.15" fill="#1b56b1" stroke="#fff" stroke-width="0.55"/><polygon points="1152.81,692.12 1154.55,692.70 1153.97,694.45" fill="#d6d8db" stroke="#fff" stroke-width="0.55"/><polygon points="1164.58,673.05 1168.77,674.10 1169.82,680.39 1167.72,683.53 1165.62,678.29" fill="#a6c6f7" stroke="#fff" stroke-width="0.55"/><polygon points="1169.82,679.34 1174.01,677.24 1178.20,678.29 1179.25,683.53 1175.05,685.62 1171.91,684.58" fill="#1f6ad4" stroke="#fff" stroke-width="0.55"/><polygon points="1176.10,683.53 1180.29,685.62 1179.25,689.82 1176.10,687.72" fill="#a6c6f7" stroke="#fff" stroke-width="0.55"/><polygon points="1169.82,695.05 1172.96,696.10 1177.15,701.34 1179.25,705.53 1177.15,706.06 1172.96,700.29" fill="#1f6ad4" stroke="#fff" stroke-width="0.55"/><polygon points="1179.25,706.58 1186.58,708.68 1184.48,709.72 1179.25,708.15" fill="#1f6ad4" stroke="#fff" stroke-width="0.55"/><polygon points="1183.44,699.25 1188.68,695.05 1191.82,696.10 1189.72,702.39 1185.53,703.44" fill="#1f6ad4" stroke="#fff" stroke-width="0.55"/><polygon points="1192.87,681.43 1194.96,682.48 1196.01,684.58 1193.91,685.62" fill="#1f6ad4" stroke="#fff" stroke-width="0.55"/><polygon points="1208.58,703.44 1212.77,703.44 1213.82,708.68 1210.68,706.58" fill="#1f6ad4" stroke="#fff" stroke-width="0.55"/><polygon points="1214.87,704.48 1220.00,706.58 1220.00,710.77 1215.92,708.68" fill="#d6d8db" stroke="#fff" stroke-width="0.55"/><polygon points="1164.25,672.68 1174.49,670.12 1180.90,680.36 1177.06,690.60 1171.93,685.48 1166.81,680.36" fill="#1f6ad4" stroke="#fff" stroke-width="0.55"/><polygon points="1169.37,693.16 1179.62,702.89 1177.57,706.48 1167.84,696.24" fill="#1f6ad4" stroke="#fff" stroke-width="0.55"/><polygon points="1182.18,695.72 1191.14,693.16 1192.93,702.13 1184.74,703.92" fill="#1f6ad4" stroke="#fff" stroke-width="0.55"/><polygon points="1191.14,675.24 1196.26,680.36 1194.98,688.04 1191.14,685.48" fill="#1f6ad4" stroke="#fff" stroke-width="0.55"/><polygon points="1210.35,703.41 1218.03,705.97 1215.47,711.09 1209.07,708.53" fill="#1f6ad4" stroke="#fff" stroke-width="0.55"/><polygon points="1184.24,725.88 1188.89,722.39 1194.71,718.89 1202.86,715.40 1207.52,714.24 1209.85,718.89 1213.34,714.24 1216.83,721.22 1221.49,729.37 1220.33,738.68 1214.51,743.34 1209.85,744.51 1205.19,739.85 1200.54,735.19 1193.55,736.36 1184.24,738.68" fill="#1f6ad4" stroke="#fff" stroke-width="0.55"/><polygon points="1208.45,748.93 1211.25,748.93 1209.85,751.26" fill="#1f6ad4" stroke="#fff" stroke-width="0.55"/><polygon points="1227.31,756.15 1233.13,751.49 1238.95,746.25 1238.37,750.33 1228.47,757.08" fill="#a6c6f7" stroke="#fff" stroke-width="0.55"/><polyline points="1058.38,680.15 1098.43,680.15" fill="none" stroke="#fff" stroke-width="0.6"/><polyline points="1083.53,662.45 1083.53,680.15" fill="none" stroke="#fff" stroke-width="0.6"/><polyline points="1098.43,668.04 1098.43,695.98" fill="none" stroke="#fff" stroke-width="0.6"/><polyline points="1089.12,680.15 1089.12,696.91" fill="none" stroke="#fff" stroke-width="0.6"/><polyline points="1068.63,680.15 1068.63,695.05" fill="none" stroke="#fff" stroke-width="0.6"/><polyline points="1085.39,695.98 1107.74,695.98" fill="none" stroke="#fff" stroke-width="0.6"/><polyline points="1088.18,710.88 1111.47,710.88" fill="none" stroke="#fff" stroke-width="0.6"/><polyline points="1090.05,718.33 1109.60,718.33" fill="none" stroke="#fff" stroke-width="0.6"/><polyline points="1077.94,680.15 1077.94,688.53" fill="none" stroke="#fff" stroke-width="0.6"/><polyline points="1098.43,685.73 1109.60,685.73" fill="none" stroke="#fff" stroke-width="0.6"/></g></svg></body></html>
